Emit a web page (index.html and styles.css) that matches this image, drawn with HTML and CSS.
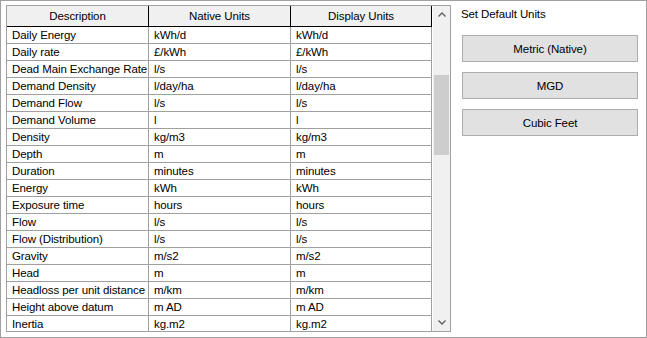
FILE: index.html
```html
<!DOCTYPE html>
<html lang="en">
<head>
    <meta charset="UTF-8">
    <title>Units</title>
    <link rel="stylesheet" href="styles.css">
</head>
<body>

<div class="window">
    <!-- units grid -->
    <div class="grid-box">
        <div class="grid-view">
            <div class="grid-row grid-head">
                <div class="cell">Description</div>
                <div class="cell">Native Units</div>
                <div class="cell">Display Units</div>
            </div>
            <div class="grid-row"><div class="cell">Daily Energy</div><div class="cell">kWh/d</div><div class="cell">kWh/d</div></div>
            <div class="grid-row"><div class="cell">Daily rate</div><div class="cell">£/kWh</div><div class="cell">£/kWh</div></div>
            <div class="grid-row"><div class="cell">Dead Main Exchange Rate</div><div class="cell">l/s</div><div class="cell">l/s</div></div>
            <div class="grid-row"><div class="cell">Demand Density</div><div class="cell">l/day/ha</div><div class="cell">l/day/ha</div></div>
            <div class="grid-row"><div class="cell">Demand Flow</div><div class="cell">l/s</div><div class="cell">l/s</div></div>
            <div class="grid-row"><div class="cell">Demand Volume</div><div class="cell">l</div><div class="cell">l</div></div>
            <div class="grid-row"><div class="cell">Density</div><div class="cell">kg/m3</div><div class="cell">kg/m3</div></div>
            <div class="grid-row"><div class="cell">Depth</div><div class="cell">m</div><div class="cell">m</div></div>
            <div class="grid-row"><div class="cell">Duration</div><div class="cell">minutes</div><div class="cell">minutes</div></div>
            <div class="grid-row"><div class="cell">Energy</div><div class="cell">kWh</div><div class="cell">kWh</div></div>
            <div class="grid-row"><div class="cell">Exposure time</div><div class="cell">hours</div><div class="cell">hours</div></div>
            <div class="grid-row"><div class="cell">Flow</div><div class="cell">l/s</div><div class="cell">l/s</div></div>
            <div class="grid-row"><div class="cell">Flow (Distribution)</div><div class="cell">l/s</div><div class="cell">l/s</div></div>
            <div class="grid-row"><div class="cell">Gravity</div><div class="cell">m/s2</div><div class="cell">m/s2</div></div>
            <div class="grid-row"><div class="cell">Head</div><div class="cell">m</div><div class="cell">m</div></div>
            <div class="grid-row"><div class="cell">Headloss per unit distance</div><div class="cell">m/km</div><div class="cell">m/km</div></div>
            <div class="grid-row"><div class="cell">Height above datum</div><div class="cell">m AD</div><div class="cell">m AD</div></div>
            <div class="grid-row"><div class="cell">Inertia</div><div class="cell">kg.m2</div><div class="cell">kg.m2</div></div>
        </div>

        <!-- vertical scrollbar -->
        <div class="scrollbar">
            <div class="scroll-btn">
                <svg width="8" height="5" viewBox="0 0 8 5"><polyline points="0.5,4.5 4,1 7.5,4.5" fill="none" stroke="#606060" stroke-width="1.4"/></svg>
            </div>
            <div class="scroll-track">
                <div class="scroll-thumb"></div>
            </div>
            <div class="scroll-btn">
                <svg width="8" height="5" viewBox="0 0 8 5"><polyline points="0.5,0.5 4,4 7.5,0.5" fill="none" stroke="#606060" stroke-width="1.4"/></svg>
            </div>
        </div>
    </div>

    <!-- default unit sets -->
    <div class="side">
        <div class="side-title">Set Default Units</div>
        <button class="side-btn">Metric (Native)</button>
        <button class="side-btn">MGD</button>
        <button class="side-btn">Cubic Feet</button>
    </div>
</div>

</body>
</html>
```

FILE: styles.css
```css
body {
    margin: 0;
    font-family: "Segoe UI", "Liberation Sans", Arial, sans-serif;
    font-size: 11.5px;
    letter-spacing: -0.1px;
    color: #000;
    background: #fff;
}

/* 外枠 */
.window {
    width: 647px;
    height: 338px;
    box-sizing: border-box;
    border: 1px solid #a0a0a0;
    padding: 4px 0 0 5px;
    display: flex;
    align-items: flex-start;
}

/* グリッド */
.grid-box {
    width: 445px;
    height: 327px;
    box-sizing: border-box;
    border: 1px solid #a0a0a0;
    display: flex;
}

.grid-view {
    width: 425px;
    height: 325px;
    overflow: hidden;
}

.grid-row {
    display: grid;
    grid-template-columns: 142px 142px 141px;
    height: 17px;
}

.cell {
    box-sizing: border-box;
    border-right: 1px solid #a0a0a0;
    border-bottom: 1px solid #a0a0a0;
    padding-left: 5px;
    line-height: 16px;
    white-space: nowrap;
    overflow: hidden;
}

.grid-head {
    height: 21px;
}

.grid-head .cell {
    background: #f0f0f0;
    border-right-color: #000;
    border-bottom-color: #000;
    text-align: center;
    padding: 2px 0 0;
}

/* スクロールバー */
.scrollbar {
    width: 17px;
    margin-left: 1px;
    background: #f0f0f0;
    display: flex;
    flex-direction: column;
}

.scroll-btn {
    height: 17px;
    display: flex;
    justify-content: center;
    align-items: center;
}

.scroll-track {
    flex: 1;
}

.scroll-thumb {
    margin: 52px 1px 0;
    height: 80px;
    background: #cdcdcd;
}

/* 右側パネル */
.side {
    margin-left: 10px;
    display: flex;
    flex-direction: column;
}

.side-title {
    line-height: 16px;
    padding-top: 1px;
}

.side-btn {
    width: 176px;
    height: 27px;
    margin: 10px 0 0 1px;
    background: #e1e1e1;
    border: 1px solid #adadad;
    font-family: inherit;
    font-size: 11.5px;
    letter-spacing: -0.1px;
    color: #000;
    padding: 0;
}

.side-btn:first-of-type {
    margin-top: 13px;
}
```
